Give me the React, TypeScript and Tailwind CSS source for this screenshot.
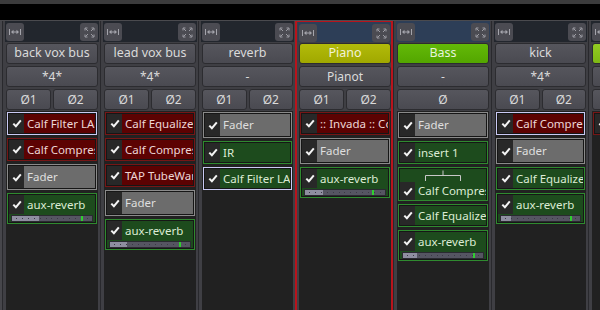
import React from 'react';

type Kind = 'red' | 'fader' | 'green';

interface Proc {
  name: string;
  kind: Kind;
  selected?: boolean;
  routing?: boolean;
  send?: { level: number; pan: number };
}

interface Strip {
  name: string;
  input: string;
  phase: string[];
  width: string;
  nameClass: string;
  selected?: boolean;
  procs: Proc[];
}

const strips: Strip[] = [
  {
    name: 'back vox bus',
    input: '*4*',
    phase: ['Ø1', 'Ø2'],
    width: 'w-[98px]',
    nameClass: 'from-[#56565d] to-[#4a4a51] text-[#dadada]',
    procs: [
      { name: 'Calf Filter LADSPA', kind: 'red', selected: true },
      { name: 'Calf Compressor', kind: 'red' },
      { name: 'Fader', kind: 'fader' },
      { name: 'aux-reverb', kind: 'green', send: { level: 0.34, pan: 0.86 } },
    ],
  },
  {
    name: 'lead vox bus',
    input: '*4*',
    phase: ['Ø1', 'Ø2'],
    width: 'w-[98px]',
    nameClass: 'from-[#56565d] to-[#4a4a51] text-[#dadada]',
    procs: [
      { name: 'Calf Equalizer', kind: 'red' },
      { name: 'Calf Compressor', kind: 'red' },
      { name: 'TAP TubeWarmth', kind: 'red' },
      { name: 'Fader', kind: 'fader' },
      { name: 'aux-reverb', kind: 'green', send: { level: 0.21, pan: 0.86 } },
    ],
  },
  {
    name: 'reverb',
    input: '-',
    phase: ['Ø1', 'Ø2'],
    width: 'w-[97px]',
    nameClass: 'from-[#56565d] to-[#4a4a51] text-[#dadada]',
    procs: [
      { name: 'Fader', kind: 'fader' },
      { name: 'IR', kind: 'green' },
      { name: 'Calf Filter LADSPA', kind: 'green', selected: true },
    ],
  },
  {
    name: 'Piano',
    input: 'Pianot',
    phase: ['Ø1', 'Ø2'],
    width: 'w-[98px]',
    nameClass: 'from-[#b2bb0a] to-[#a0a800] text-[#f2f2da]',
    selected: true,
    procs: [
      { name: ':: Invada :: Compressor', kind: 'red' },
      { name: 'Fader', kind: 'fader' },
      { name: 'aux-reverb', kind: 'green', send: { level: 0.22, pan: 0.84 } },
    ],
  },
  {
    name: 'Bass',
    input: '-',
    phase: ['Ø'],
    width: 'w-[98px]',
    nameClass: 'from-[#63b908] to-[#53a600] text-[#e6f4da]',
    procs: [
      { name: 'Fader', kind: 'fader' },
      { name: 'insert 1', kind: 'green' },
      { name: 'Calf Compressor', kind: 'green', routing: true },
      { name: 'Calf Equalizer', kind: 'green' },
      { name: 'aux-reverb', kind: 'green', send: { level: 0.17, pan: 0.88 } },
    ],
  },
  {
    name: 'kick',
    input: '*4*',
    phase: ['Ø1', 'Ø2'],
    width: 'w-[97px]',
    nameClass: 'from-[#56565d] to-[#4a4a51] text-[#dadada]',
    procs: [
      { name: 'Calf Compressor', kind: 'red', selected: true },
      { name: 'Fader', kind: 'fader' },
      { name: 'Calf Equalizer', kind: 'green' },
      { name: 'aux-reverb', kind: 'green', send: { level: 0.13, pan: 0.87 } },
    ],
  },
  {
    name: '',
    input: '',
    phase: ['', ''],
    width: 'w-[98px]',
    nameClass: 'from-[#93cb22] to-[#7eb814] text-[#f0f8e0]',
    procs: [{ name: '', kind: 'red' }],
  },
];

function WidthIcon() {
  return (
    <svg width="12" height="8" viewBox="0 0 12 8" fill="none" stroke="#a4a4ab" strokeWidth="1">
      <path d="M0.5 1v6M11.5 1v6M3 4h6" />
      <path d="M2 4l2.5-2.2v4.4zM10 4L7.5 1.8v4.4z" fill="#a4a4ab" stroke="none" />
    </svg>
  );
}

function ExpandIcon() {
  return (
    <svg width="11" height="11" viewBox="0 0 11 11" fill="none" stroke="#9d9da4" strokeWidth="1">
      <path d="M1.5 1.5l2.5 2.5M9.5 1.5L7 4M1.5 9.5L4 7M9.5 9.5L7 7" />
      <path d="M1 3.5V1h2.5M10 3.5V1H7.5M1 7.5V10h2.5M10 7.5V10H7.5" />
    </svg>
  );
}

function Check() {
  return (
    <svg width="10" height="9" viewBox="0 0 10 9" fill="none">
      <path d="M1.3 4.6L3.9 7.2L8.8 1.4" stroke="#f4f4f4" strokeWidth="2" />
    </svg>
  );
}

const kindStyle: Record<Kind, { border: string; fill: string; text: string }> = {
  red: { border: 'border-[#761616]', fill: 'bg-[#5c0202]', text: 'text-[#ecd6d6]' },
  fader: { border: 'border-[#8a8a8a]', fill: 'bg-[#6c6c6c]', text: 'text-[#dedede]' },
  green: { border: 'border-[#2f8a2f]', fill: 'bg-[#1d4b1d]', text: 'text-[#dcebd4]' },
};

function SendSlider({ level, pan }: { level: number; pan: number }) {
  return (
    <div className="relative mx-[2px] mt-[1px] h-[7px] border border-[#2a2a30] bg-[#555562]">
      <div className="absolute left-0 top-0 bottom-0 bg-[#8e8ea0]" style={{ width: `${level * 100}%` }} />
      <div className="absolute inset-0 flex items-center justify-around px-[2px]">
        {Array.from({ length: 13 }).map((_, i) => (
          <div key={i} className="w-px h-px bg-[#3a3a44]" />
        ))}
      </div>
      <div className="absolute top-0 bottom-0 w-[2px] bg-[#2fd02f]" style={{ left: `${pan * 100}%` }} />
    </div>
  );
}

function ProcBox({ p }: { p: Proc }) {
  const s = kindStyle[p.kind];
  const border = p.selected ? 'border-[#cacaf4]' : s.border;
  const height = p.kind === 'fader' ? 'h-[26px]' : p.send ? 'h-[31px]' : p.routing ? 'h-[34px]' : 'h-[23px]';
  return (
    <div className={`${height} shrink-0 border ${border} bg-[#161616] p-[1px] flex flex-col`}>
      {p.routing && (
        <div className={`h-[13px] ${s.fill} flex justify-center`}>
          <svg width="38" height="13" viewBox="0 0 38 13" fill="none" stroke="#c8c8c8" strokeWidth="1">
            <path d="M19 1.5v5M1.5 12V6.5h35V12" />
          </svg>
        </div>
      )}
      <div className={`flex ${p.send ? 'h-[19px]' : 'flex-1'}`}>
        <div className="w-[15px] shrink-0 bg-[#282828] flex items-center justify-center">
          <Check />
        </div>
        <div
          className={`flex-1 ${s.fill} ${s.text} pl-[3px] text-[11.5px] leading-[18px] flex items-center whitespace-nowrap overflow-hidden`}
        >
          {p.name}
        </div>
      </div>
      {p.send && (
        <div className={`flex-1 ${s.fill} flex flex-col`}>
          <SendSlider level={p.send.level} pan={p.send.pan} />
        </div>
      )}
    </div>
  );
}

const btn =
  'h-[21px] rounded-[3px] border border-[#2c2c30] bg-linear-to-b from-[#56565d] to-[#4a4a51] text-[12px] text-[#dadada] flex items-center justify-center whitespace-nowrap overflow-hidden';

function MixerStrip({ s }: { s: Strip }) {
  const outer = s.selected
    ? 'border-x-2 border-t border-[#b8141c] pl-[2px]'
    : 'border-l border-[#29292d] pl-[3px] pr-[2px]';
  return (
    <div className={`${s.width} shrink-0 flex flex-col bg-[#3f3f44] ${outer}`}>
      <div
        className={`-ml-[1px] shrink-0 px-[1px] pt-[2px] flex justify-between ${
          s.selected ? 'bg-[#2d3e57] h-[20px] mr-0' : s.name === 'Bass' ? 'bg-[#2d3e57] h-[21px] -mr-[1px]' : 'bg-[#22262d] h-[21px] -mr-[1px]'
        }`}
      >
        <div className="w-[18px] h-[18px] rounded-[3px] bg-[#4b4b52] flex items-center justify-center">
          <WidthIcon />
        </div>
        <div className="w-[18px] h-[18px] rounded-[3px] bg-[#4b4b52] flex items-center justify-center">
          <ExpandIcon />
        </div>
      </div>
      <div
        className={`mt-[1px] h-[21px] rounded-[3px] border border-[#2c2c30] bg-linear-to-b ${s.nameClass} text-[12.5px] flex items-center justify-center whitespace-nowrap overflow-hidden`}
      >
        {s.name}
      </div>
      <div className={`mt-[2px] ${btn}`}>{s.input}</div>
      <div className="mt-[2px] flex gap-[2px]">
        {s.phase.map((ph, i) => (
          <div key={i} className={`flex-1 ${btn}`}>
            {ph}
          </div>
        ))}
      </div>
      <div className="mt-[1px] flex-1 bg-[#212121] px-[1px] pt-[1px] flex flex-col gap-[3px] overflow-hidden">
        {s.procs.map((p, i) => (
          <ProcBox key={i} p={p} />
        ))}
      </div>
    </div>
  );
}

export default function App() {
  return (
    <div className="w-[600px] h-[310px] overflow-hidden flex flex-col bg-[#3f3f44] font-['Noto_Sans',sans-serif]">
      <div className="h-[4px] shrink-0 bg-[#3b3b3c]" />
      <div className="h-[16px] shrink-0 bg-black" />
      <div className="flex-1 flex border-t border-[#4a4a4e] overflow-hidden">
        <div className="w-[2px] shrink-0 bg-[#46464b]" />
        {strips.map((s, i) => (
          <MixerStrip key={i} s={s} />
        ))}
      </div>
    </div>
  );
}
